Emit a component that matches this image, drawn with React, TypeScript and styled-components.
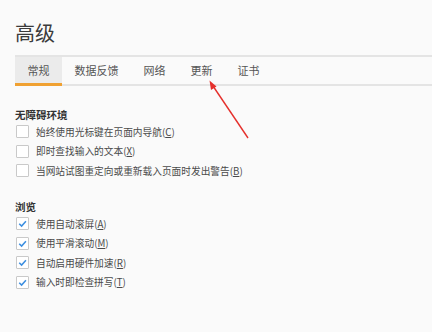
import styled, { createGlobalStyle } from "styled-components"

const GlobalStyle = createGlobalStyle`
  html, body {
    margin: 0;
    padding: 0;
    background: #fafafa;
  }
  body {
    font-family: "Noto Sans CJK SC", "Noto Sans", sans-serif;
    color: #3a3a3a;
  }
`

const Page = styled.div`
  position: relative;
  width: 432px;
  height: 332px;
  overflow: hidden;
  padding-left: 15px;
  box-sizing: border-box;
`

const Title = styled.h1`
  margin: 0;
  padding-top: 19px;
  height: 55px;
  box-sizing: border-box;
  font-size: 20px;
  line-height: 28px;
  font-weight: 400;
  color: #3b3b3b;
`

const TabBar = styled.div`
  display: flex;
  height: 31px;
  box-sizing: border-box;
  border-top: 2px solid #e4e4e4;
  border-bottom: 2px solid #e4e4e4;
`

const Tab = styled.div<{ $active?: boolean }>`
  display: flex;
  align-items: center;
  padding: 0 12.5px;
  font-size: 11px;
  color: #555;
  background: ${p => (p.$active ? "#ebebeb" : "transparent")};
  border-bottom: 3px solid ${p => (p.$active ? "#f0a132" : "transparent")};
  margin-bottom: -2px;
`

const Section = styled.section<{ $top: number }>`
  margin-top: ${p => p.$top}px;
`

const Heading = styled.div`
  font-size: 10.5px;
  font-weight: 700;
  line-height: 14px;
  color: #333;
`

const Row = styled.label`
  display: flex;
  align-items: center;
  height: 19.5px;
  gap: 7px;
  font-size: 9.7px;
  color: #4a4a4a;
`

const Box = styled.span`
  width: 13px;
  height: 13px;
  margin-left: 1px;
  box-sizing: border-box;
  border: 1px solid #c9c9c9;
  border-radius: 1px;
  background: #fff;
  display: flex;
  align-items: center;
  justify-content: center;
`

const Key = styled.span`
  text-decoration: underline;
`

const Arrow = styled.svg`
  position: absolute;
  left: 0;
  top: 0;
  pointer-events: none;
`

const tabs = ["常规", "数据反馈", "网络", "更新", "证书"]

const access = [
  ["始终使用光标键在页面内导航", "C"],
  ["即时查找输入的文本", "X"],
  ["当网站试图重定向或重新载入页面时发出警告", "B"],
]

const browse = [
  ["使用自动滚屏", "A"],
  ["使用平滑滚动", "M"],
  ["自动启用硬件加速", "R"],
  ["输入时即检查拼写", "T"],
]

const Check = () => (
  <svg width="9" height="9" viewBox="0 0 10 10">
    <path d="M1.4 5.2 L4 7.8 L8.8 2.4" fill="none" stroke="#3d8fe0" strokeWidth="1.7" />
  </svg>
)

export default function App() {
  return (
    <Page>
      <GlobalStyle />
      <Title>高级</Title>
      <TabBar>
        {tabs.map((t, i) => (
          <Tab key={t} $active={i === 0}>
            {t}
          </Tab>
        ))}
      </TabBar>

      <Section $top={22}>
        <Heading>无障碍环境</Heading>
        {access.map(([label, key]) => (
          <Row key={key}>
            <Box />
            <span>
              {label}(<Key>{key}</Key>)
            </span>
          </Row>
        ))}
      </Section>

      <Section $top={19.5}>
        <Heading>浏览</Heading>
        {browse.map(([label, key]) => (
          <Row key={key}>
            <Box>
              <Check />
            </Box>
            <span>
              {label}(<Key>{key}</Key>)
            </span>
          </Row>
        ))}
      </Section>

      <Arrow width="432" height="332">
        <line x1="248" y1="138" x2="213" y2="86" stroke="#e5302c" strokeWidth="1.4" />
        <path d="M209.5 80.5 L211 90 L216.5 86.5 Z" fill="#e5302c" />
      </Arrow>
    </Page>
  )
}
